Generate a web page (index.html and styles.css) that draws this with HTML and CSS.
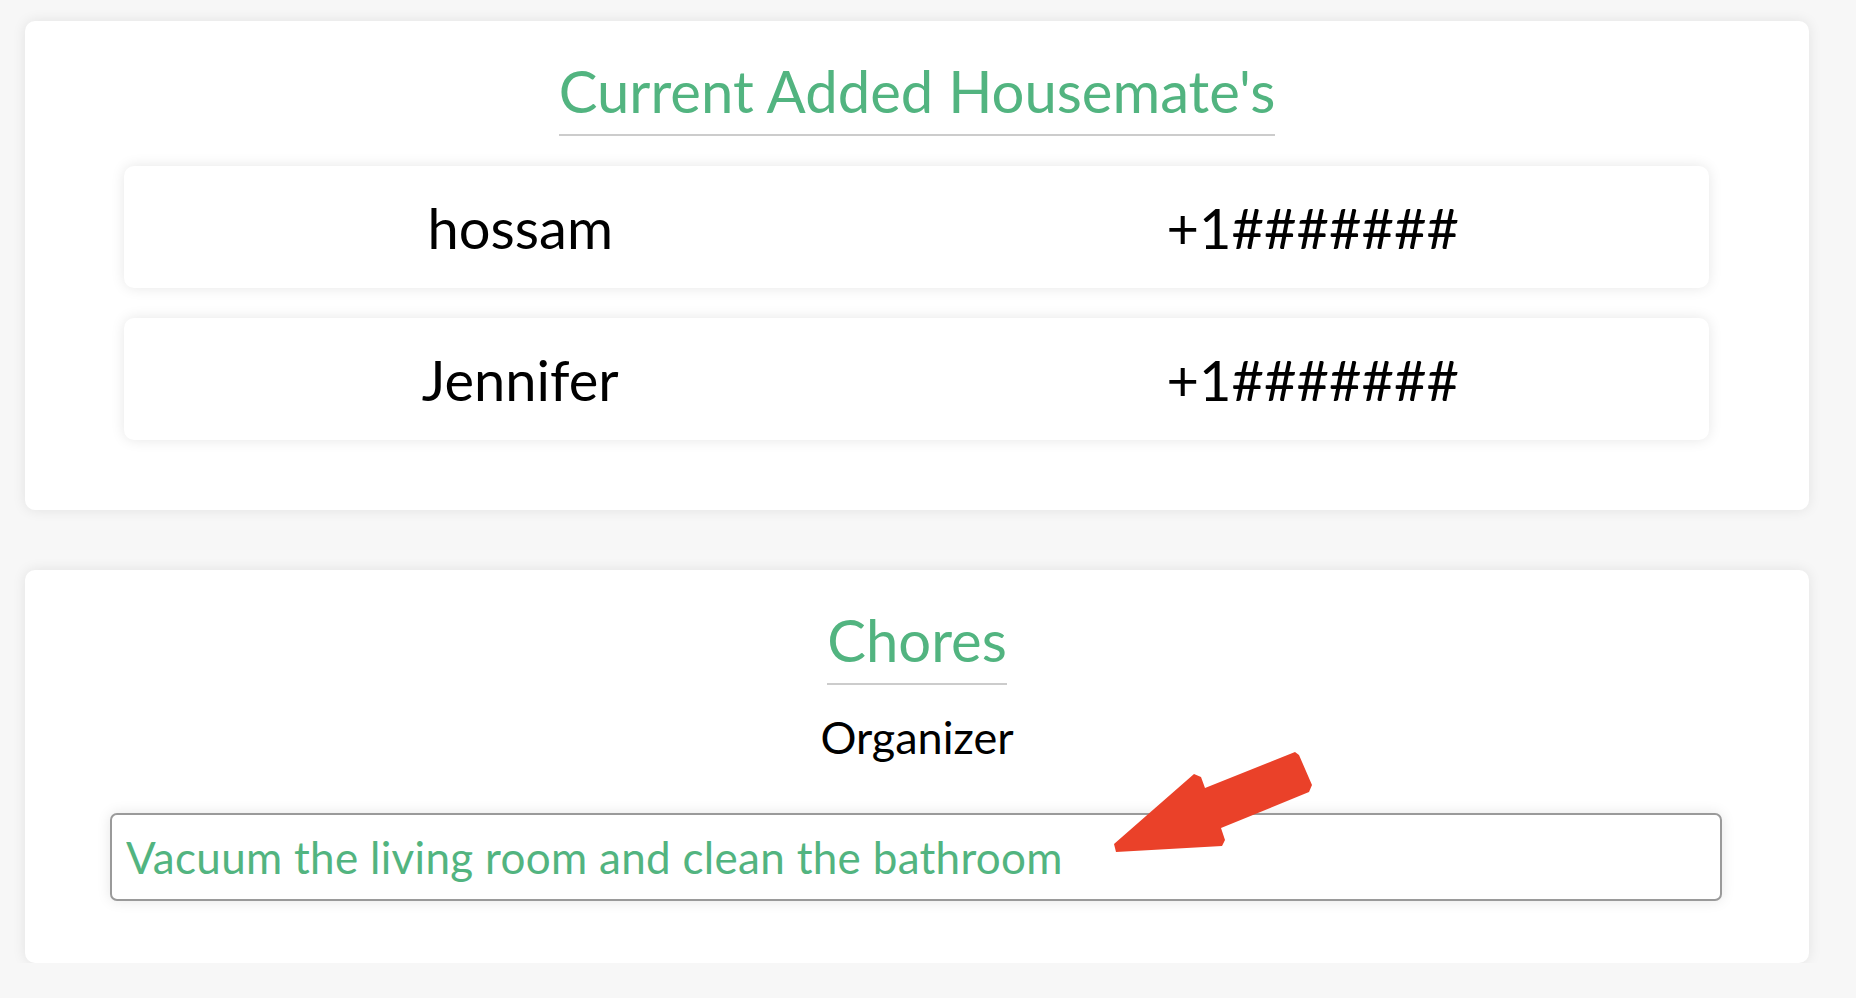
FILE: index.html
```html
<!DOCTYPE html>
<html lang="en">
<head>
<meta charset="utf-8">
<title>Housemates</title>
<link rel="stylesheet" href="styles.css">
</head>
<body>
<main class="page">
  <section class="card">
    <h2 class="card-title">Current Added Housemate's</h2>
    <ul class="mate-list">
      <li class="mate-row"><span class="mate-cell">hossam</span><span class="mate-cell">+1#######</span></li>
      <li class="mate-row"><span class="mate-cell">Jennifer</span><span class="mate-cell">+1#######</span></li>
    </ul>
  </section>
  <section class="card card-chores">
    <h2 class="card-title">Chores</h2>
    <p class="organizer">Organizer</p>
    <div class="chore-field">
      <input class="chore-input" type="text" value="Vacuum the living room and clean the bathroom">
      <svg class="annotation-arrow" width="198" height="100" viewBox="0 0 198 100" aria-hidden="true">
        <polygon fill="#ea4129" points="181,0 185,3 198,33 195,40 107,76 111,88 108,94 2,100 0,92 80,22 87,25 91,36"/>
      </svg>
    </div>
  </section>
</main>
</body>
</html>
```

FILE: styles.css
```css
html, body {
  margin: 0;
  padding: 0;
  background: #f7f7f7;
}

body {
  font-family: "Lato", "Open Sans", sans-serif;
  color: #000;
}

.page {
  display: flex;
  flex-direction: column;
  gap: 60px;
  margin: 21px 47px 0 25px;
}

.card {
  background: #fff;
  border-radius: 10px;
  box-shadow: 0 0 14px rgba(0, 0, 0, 0.09);
  display: flex;
  flex-direction: column;
  align-items: center;
  padding: 36px 0 70px;
}

.card-chores {
  padding-bottom: 62px;
}

.card-title {
  margin: 0;
  font-size: 58px;
  font-weight: 400;
  line-height: 67px;
  color: #52b480;
  padding-bottom: 10px;
  border-bottom: 2px solid #cccccc;
}

.mate-list {
  list-style: none;
  margin: 30px 0 0;
  align-self: stretch;
  display: flex;
  flex-direction: column;
  gap: 30px;
  padding: 0 100px 0 99px;
}

.mate-row {
  height: 122px;
  background: #fff;
  border-radius: 10px;
  box-shadow: 0 0 14px rgba(0, 0, 0, 0.1);
  display: grid;
  grid-template-columns: 1fr 1fr;
  align-items: center;
  font-size: 56px;
  line-height: 67px;
}

.mate-cell {
  text-align: center;
}

.organizer {
  margin: 26px 0 0;
  font-size: 45px;
  line-height: 53px;
}

.chore-field {
  position: relative;
  align-self: stretch;
  margin: 49px 87px 0 85px;
}

.chore-input {
  display: block;
  box-sizing: border-box;
  width: 100%;
  height: 88px;
  margin: 0;
  padding: 0 14px;
  border: 2px solid #9a9a9a;
  border-radius: 7px;
  background: #fff;
  box-shadow: 0 0 14px rgba(0, 0, 0, 0.1);
  font-family: "Lato", "Open Sans", sans-serif;
  font-size: 44px;
  letter-spacing: 0.3px;
  color: #52b480;
  outline: none;
}

.annotation-arrow {
  position: absolute;
  left: 1004px;
  top: -61px;
  display: block;
}
```
